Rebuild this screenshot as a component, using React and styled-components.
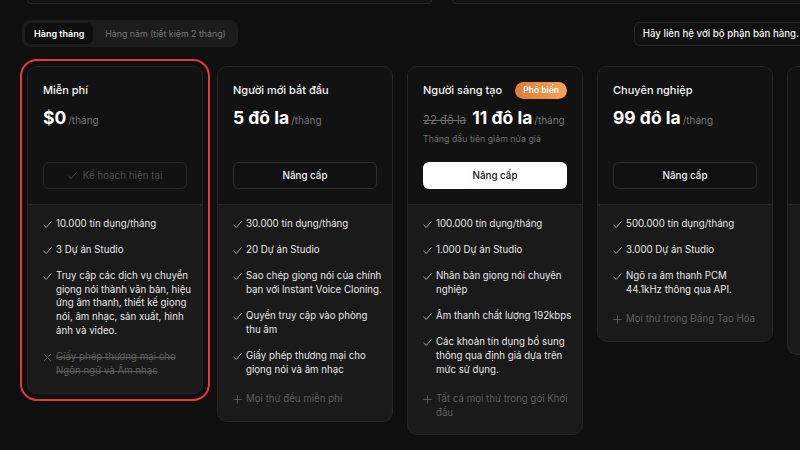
import React from 'react'
import styled, { createGlobalStyle, css } from 'styled-components'

const GlobalStyle = createGlobalStyle`
    html, body {
        margin: 0;
        padding: 0;
        background: #0f0f0f;
        overflow: hidden;
    }
    body {
        font-family: Inter, "Noto Sans", "Liberation Sans", sans-serif;
        color: #ededed;
        -webkit-font-smoothing: antialiased;
    }
    * {
        box-sizing: border-box;
    }
`

const Page = styled.div`
    width: 800px;
    height: 450px;
    overflow: hidden;
    padding-left: 27px;
`

const TopStrip = styled.div`
    display: flex;
    gap: 20px;
    height: 4px;
`

const StripBox = styled.div`
    flex: ${p => p.grow ? '1 0 auto' : '0 0 auto'};
    width: ${p => p.w}px;
    height: 4px;
    background: #141414;
    border: 1px solid #262626;
    border-top: none;
    border-radius: 0 0 8px 8px;
`

const TopBar = styled.div`
    display: flex;
    align-items: center;
    justify-content: space-between;
    margin-top: 16px;
    margin-left: -5px;
`

const Toggle = styled.div`
    display: flex;
    align-items: center;
    height: 27px;
    padding: 3px;
    gap: 2px;
    background: #1c1c1c;
    border-radius: 8px;
`

const Tab = styled.div`
    height: 21px;
    display: flex;
    align-items: center;
    padding: 0 9px;
    border-radius: 6px;
    font-size: 9px;
    white-space: nowrap;
    ${p => p.active ? css`
        background: #0e0e0e;
        color: #fff;
        font-weight: 600;
    ` : css`
        color: #777;
        font-weight: 400;
        font-size: 8.8px;
        padding: 0 9px 0 10px;
    `}
`

const ContactButton = styled.div`
    height: 24px;
    display: flex;
    align-items: center;
    padding: 0 8px;
    border: 1px solid #2a2a2a;
    border-radius: 6px;
    background: #111;
    color: #f0f0f0;
    font-size: 9.7px;
    font-weight: 500;
    white-space: nowrap;
    flex-shrink: 0;
    margin-right: -8px;
`

const Cards = styled.div`
    display: flex;
    align-items: flex-start;
    gap: 14px;
    margin-top: 19px;
`

const Card = styled.div`
    width: 176px;
    flex-shrink: 0;
    border: 1px solid #252525;
    border-radius: 10px;
    overflow: hidden;
    background: #1a1a1a;
    ${p => p.selected && css`
        outline: 2px solid #e23b3b;
        outline-offset: 5px;
    `}
`

const Head = styled.div`
    height: 138px;
    display: flex;
    flex-direction: column;
    padding: 14px 15px 15px;
    background: #121212;
    border-bottom: 1px solid #252525;
`

const Title = styled.div`
    display: flex;
    align-items: center;
    justify-content: space-between;
    height: 18px;
    font-size: 11px;
    font-weight: 500;
    color: #f4f4f4;
    white-space: nowrap;
`

const Badge = styled.span`
    height: 17px;
    display: inline-flex;
    align-items: center;
    padding: 0 8px;
    border-radius: 9px;
    background: linear-gradient(90deg, #e27a36, #f2a55b);
    color: #fff;
    font-size: 8.5px;
    font-weight: 600;
`

const PriceRow = styled.div`
    display: flex;
    align-items: baseline;
    gap: 2px;
    margin-top: 8px;
    height: 24px;
    white-space: nowrap;
`

const OldPrice = styled.span`
    font-size: 11.4px;
    color: #6e6e6e;
    text-decoration: line-through;
    margin-right: 4px;
`

const Price = styled.span`
    font-size: 17.5px;
    font-weight: 700;
    color: #fff;
`

const Per = styled.span`
    font-size: 10px;
    color: #777;
`

const Note = styled.div`
    margin-top: 1px;
    font-size: 8.8px;
    line-height: 14px;
    color: #6e6e6e;
`

const PlanButton = styled.div`
    margin-top: auto;
    height: 27px;
    display: flex;
    align-items: center;
    justify-content: center;
    gap: 6px;
    border-radius: 6px;
    font-size: 9.8px;
    font-weight: 500;
    ${p => p.variant === 'primary' && css`
        background: #fff;
        color: #111;
    `}
    ${p => p.variant === 'outline' && css`
        border: 1px solid #2e2e2e;
        background: #101010;
        color: #f2f2f2;
    `}
    ${p => p.variant === 'current' && css`
        border: 1px solid #262626;
        color: #4e4e4e;
        font-weight: 400;
    `}
`

const Features = styled.ul`
    list-style: none;
    margin: 0;
    padding: 11.5px 12px 15px 15px;
    display: flex;
    flex-direction: column;
    gap: 12.4px;
`

const Feature = styled.li`
    display: flex;
    gap: 4px;
    font-size: 9.7px;
    line-height: 13.8px;
    color: ${p => p.kind === 'check' ? '#e6e6e6' : '#5e5e5e'};
    text-decoration: ${p => p.kind === 'cross' ? 'line-through' : 'none'};
    margin-top: ${p => p.kind === 'plus' ? '3px' : '0'};
`

const Lines = styled.span`
    display: flex;
    flex-direction: column;
    span {
        white-space: nowrap;
    }
`

const IconBox = styled.span`
    width: 9px;
    flex-shrink: 0;
    padding-top: 3px;
    display: flex;
`

const icons = {
    check: 'M0.8 5.6 L3.6 8.3 L9.2 1.8',
    plus: 'M5 0.8 V9.2 M0.8 5 H9.2',
    cross: 'M1.2 1.2 L8.8 8.8 M8.8 1.2 L1.2 8.8',
}

const Icon = ({ kind, color }) => (
    <svg width="9" height="9" viewBox="0 0 10 10" fill="none">
        <path d={icons[kind]} stroke={color} strokeWidth="1" strokeLinecap="round" strokeLinejoin="round" />
    </svg>
)

const plans = [
    {
        name: 'Miễn phí',
        price: '$0',
        selected: true,
        button: { variant: 'current', label: 'Kế hoạch hiện tại' },
        features: [
            ['check', ['10.000 tín dụng/tháng']],
            ['check', ['3 Dự án Studio']],
            ['check', ['Truy cập các dịch vụ chuyển', 'giọng nói thành văn bản, hiệu', 'ứng âm thanh, thiết kế giọng', 'nói, âm nhạc, sản xuất, hình', 'ảnh và video.']],
            ['cross', ['Giấy phép thương mại cho', 'Ngôn ngữ và Âm nhạc']],
        ],
    },
    {
        name: 'Người mới bắt đầu',
        price: '5 đô la',
        button: { variant: 'outline', label: 'Nâng cấp' },
        features: [
            ['check', ['30.000 tín dụng/tháng']],
            ['check', ['20 Dự án Studio']],
            ['check', ['Sao chép giọng nói của chính', 'bạn với Instant Voice Cloning.']],
            ['check', ['Quyền truy cập vào phòng', 'thu âm']],
            ['check', ['Giấy phép thương mại cho', 'giọng nói và âm nhạc']],
            ['plus', ['Mọi thứ đều miễn phí']],
        ],
    },
    {
        name: 'Người sáng tạo',
        badge: 'Phổ biến',
        oldPrice: '22 đô la',
        price: '11 đô la',
        note: 'Tháng đầu tiên giảm nửa giá',
        button: { variant: 'primary', label: 'Nâng cấp' },
        features: [
            ['check', ['100.000 tín dụng/tháng']],
            ['check', ['1.000 Dự án Studio']],
            ['check', ['Nhân bản giọng nói chuyên', 'nghiệp']],
            ['check', ['Âm thanh chất lượng 192kbps']],
            ['check', ['Các khoản tín dụng bổ sung', 'thông qua định giá dựa trên', 'mức sử dụng.']],
            ['plus', ['Tất cả mọi thứ trong gói Khởi', 'đầu']],
        ],
    },
    {
        name: 'Chuyên nghiệp',
        price: '99 đô la',
        button: { variant: 'outline', label: 'Nâng cấp' },
        features: [
            ['check', ['500.000 tín dụng/tháng']],
            ['check', ['3.000 Dự án Studio']],
            ['check', ['Ngõ ra âm thanh PCM', '44.1kHz thông qua API.']],
            ['plus', ['Mọi thứ trong Đấng Tạo Hóa']],
        ],
    },
    {
        name: 'Quy mô',
        price: '330 đô la',
        button: { variant: 'outline', label: 'Nâng cấp' },
        features: [
            ['check', ['2.000.000 tín dụng/tháng']],
            ['check', ['5.000 Dự án Studio']],
            ['check', ['Không gian làm việc nhiều', 'chỗ ngồi']],
            ['plus', ['Mọi thứ trong gói Chuyên', 'nghiệp']],
        ],
    },
]

const iconColor = { check: '#b5b5b5', plus: '#5e5e5e', cross: '#5e5e5e' }

const PlanCard = ({ plan }) => (
    <Card selected={plan.selected}>
        <Head>
            <Title>
                {plan.name}
                {plan.badge && <Badge>{plan.badge}</Badge>}
            </Title>
            <PriceRow>
                {plan.oldPrice && <OldPrice>{plan.oldPrice}</OldPrice>}
                <Price>{plan.price}</Price>
                <Per>/tháng</Per>
            </PriceRow>
            {plan.note && <Note>{plan.note}</Note>}
            <PlanButton variant={plan.button.variant}>
                {plan.button.variant === 'current' && <Icon kind="check" color="#4e4e4e" />}
                {plan.button.label}
            </PlanButton>
        </Head>
        <Features>
            {plan.features.map(([kind, lines], i) => (
                <Feature key={i} kind={kind}>
                    <IconBox><Icon kind={kind} color={iconColor[kind]} /></IconBox>
                    <Lines>
                        {lines.map((l, j) => <span key={j}>{l}</span>)}
                    </Lines>
                </Feature>
            ))}
        </Features>
    </Card>
)

export default function App() {
    return (
        <Page>
            <GlobalStyle />
            <TopStrip>
                <StripBox w={405} />
                <StripBox w={400} grow />
            </TopStrip>
            <TopBar>
                <Toggle>
                    <Tab active>Hàng tháng</Tab>
                    <Tab>Hàng năm (tiết kiệm 2 tháng)</Tab>
                </Toggle>
                <ContactButton>Hãy liên hệ với bộ phận bán hàng.</ContactButton>
            </TopBar>
            <Cards>
                {plans.map(p => <PlanCard key={p.name} plan={p} />)}
            </Cards>
        </Page>
    )
}
